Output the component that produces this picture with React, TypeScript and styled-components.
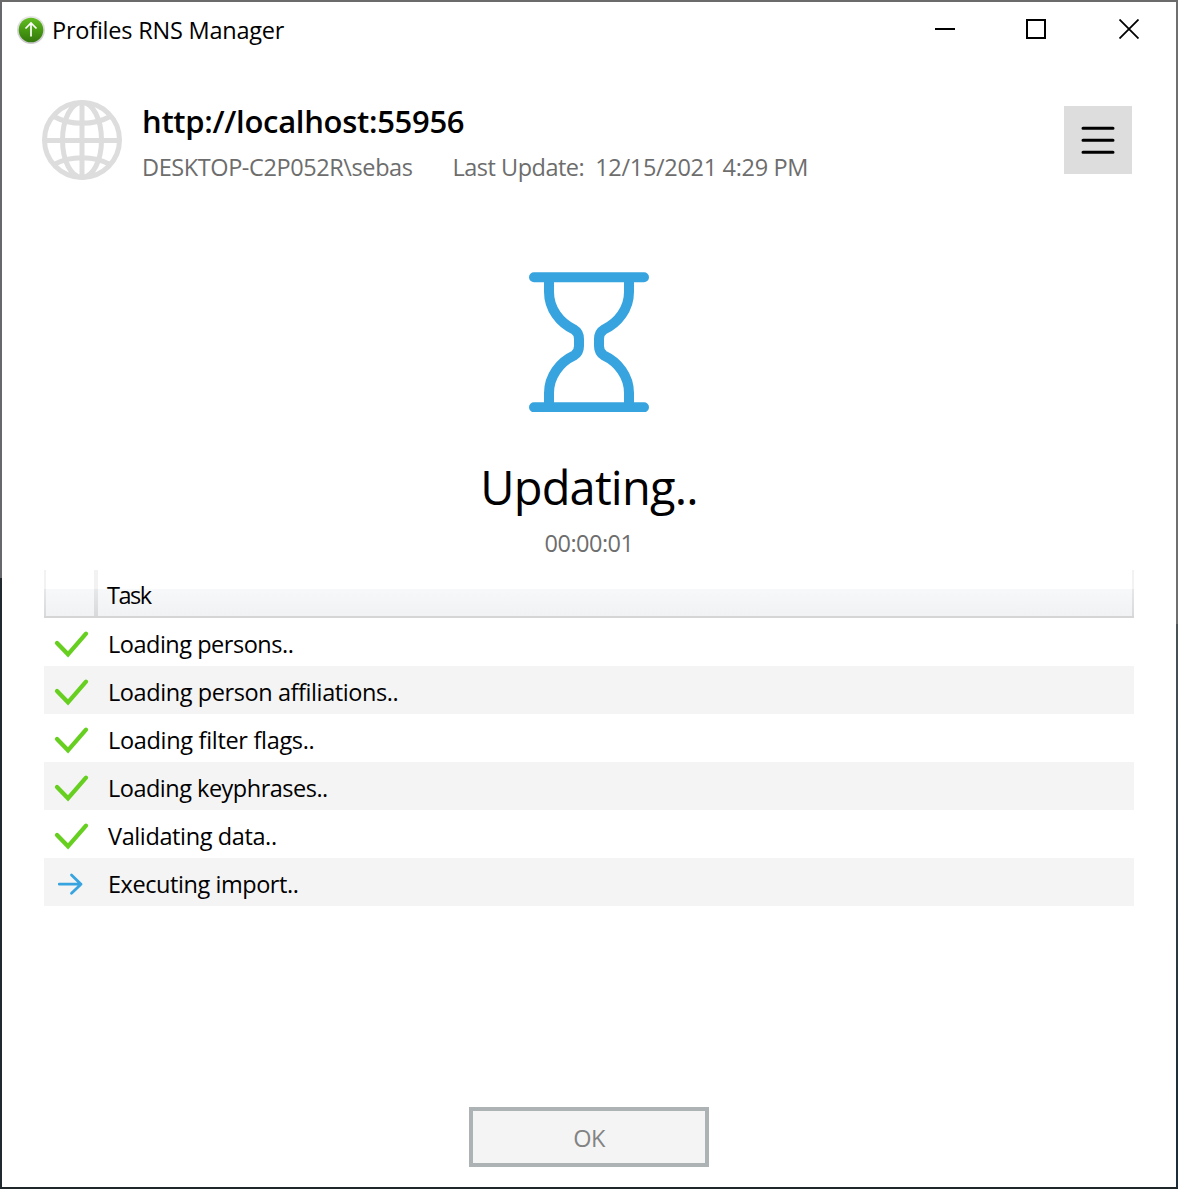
import React from "react";
import styled, { createGlobalStyle } from "styled-components";

const GlobalStyle = createGlobalStyle`
  * { box-sizing: border-box; }
  body { margin: 0; background: #fff; overflow: hidden; }
`;

const WindowFrame = styled.div`
  width: 1178px;
  height: 1189px;
  padding: 2px;
  font-family: "Open Sans", "Noto Sans", sans-serif;
  color: #000;
  background:
    linear-gradient(#6b6b6b, #6b6b6b) top / 100% 2px no-repeat,
    linear-gradient(#20282c, #20262a) bottom / 100% 2px no-repeat,
    linear-gradient(#66686b 0 578px, #22292e 578px) left / 2px 100% no-repeat,
    linear-gradient(#6f6f6e 0 624px, #4a5258 624px, #1c2c38 1100px) right / 2px 100% no-repeat;
`;

const Surface = styled.div`
  height: 100%;
  display: flex;
  flex-direction: column;
  background: #fff;
`;

const Text = styled.span<{ $size?: number; $weight?: number; $track?: number; $color?: string; $line?: number }>`
  display: block;
  white-space: pre;
  font-size: ${(p) => p.$size ?? 23.5}px;
  font-weight: ${(p) => p.$weight ?? 400};
  letter-spacing: ${(p) => p.$track ?? -0.5}px;
  line-height: ${(p) => p.$line ?? 32}px;
  color: ${(p) => p.$color ?? "#000"};
`;

const TitleBar = styled.header`
  display: flex;
  align-items: center;
  height: 56px;
  padding: 0 1px 0 14px;
`;

const TitleText = styled(Text)`
  flex: 1;
  padding: 0 0 0 6px;
`;

const CaptionButton = styled.button<{ $nudge?: number }>`
  width: 92px;
  height: 56px;
  padding: 0 ${(p) => p.$nudge ?? 0}px 2px 0;
  border: 0;
  background: none;
  display: flex;
  align-items: center;
  justify-content: center;
`;

const SiteHeader = styled.section`
  display: flex;
  align-items: flex-start;
  height: 122px;
  padding: 42px 44px 0 40px;
`;

const SiteInfo = styled.div`
  flex: 1;
  padding-left: 20px;
`;

const SiteMeta = styled.div`
  display: flex;
  margin-top: 9px;
`;

const MetaItem = styled(Text)<{ $gap?: number }>`
  margin-left: ${(p) => p.$gap ?? 0}px;
`;

const MenuButton = styled.button`
  width: 68px;
  height: 68px;
  margin-top: 6px;
  padding: 0;
  border: 0;
  background: #ddd;
  display: flex;
  align-items: center;
  justify-content: center;
`;

const Status = styled.section`
  display: flex;
  flex-direction: column;
  align-items: center;
  height: 390px;
  padding-top: 92px;
`;

const StatusTitle = styled(Text)`
  margin-top: 41px;
`;

const Elapsed = styled(Text)`
  margin-top: 6px;
`;

const TaskTable = styled.div`
  width: 1090px;
  margin-left: 42px;
  flex: 1;
`;

const HeadRow = styled.div`
  display: grid;
  grid-template-columns: 54px 1fr;
  height: 48px;
  border-bottom: 2px solid #d5d5d5;
  background: linear-gradient(#fff 0 19px, #f7f8f9 19px, #f1f2f4 46px);
`;

const edge = "linear-gradient(#f2f2f2 0 19px, #e6e7e8 19px, #d9dadb 46px)";

const IconHead = styled.div`
  background: ${edge} left / 2px 100% no-repeat, ${edge} right / 4px 100% no-repeat;
`;

const TaskHead = styled.div`
  padding: 9px 0 0 9px;
  background: ${edge} right / 2px 100% no-repeat;
`;

const TaskRow = styled.div`
  display: grid;
  grid-template-columns: 54px 1fr;
  align-items: center;
  height: 48px;
  background: #fff;
  &:nth-child(odd) { background: #f4f4f4; }
`;

const TaskName = styled(Text)`
  padding: 4px 0 0 10px;
`;

const Footer = styled.footer`
  display: flex;
  justify-content: center;
  height: 80px;
`;

const OkButton = styled.button`
  width: 240px;
  height: 60px;
  padding: 1px 0 0;
  border: 4px solid #adb2b5;
  background: #f4f4f4;
  font-family: inherit;
  display: flex;
  align-items: center;
  justify-content: center;
`;

const Svg = styled.svg`
  display: block;
  flex: none;
`;

const AppIcon = () => (
  <Svg width="30" height="30" viewBox="0 0 30 30" fill="none">
    <defs>
      <linearGradient id="badge" x1="0" y1="0" x2="0" y2="1">
        <stop offset="0" stopColor="#63bd22" />
        <stop offset="0.5" stopColor="#479a12" />
        <stop offset="1" stopColor="#33780c" />
      </linearGradient>
      <linearGradient id="rim" x1="0" y1="0" x2="0" y2="1">
        <stop offset="0" stopColor="#e9e9e9" />
        <stop offset="1" stopColor="#c9c6cc" />
      </linearGradient>
    </defs>
    <circle cx="15" cy="15" r="14" fill="url(#rim)" />
    <circle cx="15" cy="15" r="12.3" fill="url(#badge)" />
    <path d="M15 21.5V8M9.5 13.5L15 8l5.500 5.500" stroke="#fff" strokeWidth="1.700" />
  </Svg>
);

const GlobeIcon = () => (
  <Svg width="80" height="80" viewBox="0 0 80 80" fill="none" stroke="#ddd" strokeWidth="5">
    <circle cx="40" cy="40" r="37.5" />
    <ellipse cx="40" cy="40" rx="19.5" ry="37.5" />
    <path d="M40 2v76M2 40.500h76M12 16.500Q24 23.300 40 23.300T68 16.500M12 64.500Q24 57.700 40 57.700T68 64.500" />
  </Svg>
);

const HourglassIcon = () => (
  <Svg width="120" height="140" viewBox="0 0 120 140" fill="none" stroke="#37a4e0" strokeWidth="10">
    <path strokeLinecap="round" d="M5 5.300H115M5 135.300H115" />
    <path d="M20 5V20C20 37 31 51 45 57.500Q50 60.500 50 67V74Q50 80.500 45 83.500C31 90 20 104 20 121V135" />
    <path d="M100 5V20C100 37 89 51 75 57.500Q70 60.500 70 67V74Q70 80.500 75 83.500C89 90 100 104 100 121V135" />
  </Svg>
);

const MenuIcon = () => (
  <Svg width="36" height="32" viewBox="0 0 36 32" stroke="#000" strokeWidth="3" strokeLinecap="round">
    <path d="M3 4.200h30M3 16.200h30M3 28.200h30" />
  </Svg>
);

const CheckIcon = () => (
  <Svg width="54" height="48" viewBox="0 0 54 48" fill="none" stroke="#66cf20" strokeWidth="4.300" strokeLinecap="round">
    <path d="M13 25L24 36.300L42 15.700" />
  </Svg>
);

const ArrowIcon = () => (
  <Svg width="54" height="48" viewBox="0 0 54 48" fill="none" stroke="#37a4e0" strokeWidth="2.800" strokeLinecap="round" strokeLinejoin="round">
    <path d="M15.300 26.200H37M27.500 17L37 26.200L27.500 35.300" />
  </Svg>
);

const tasks = [
  { name: "Loading persons..", done: true, track: -0.48 },
  { name: "Loading person affiliations..", done: true, track: -0.41 },
  { name: "Loading filter flags..", done: true, track: -0.31 },
  { name: "Loading keyphrases..", done: true, track: -0.5 },
  { name: "Validating data..", done: true, track: -0.38 },
  { name: "Executing import..", done: false, track: -0.44 },
];

export default function App() {
  return (
    <>
      <GlobalStyle />
      <WindowFrame>
        <Surface>
          <TitleBar>
            <AppIcon />
            <TitleText $track={-0.22}>Profiles RNS Manager</TitleText>
            <CaptionButton aria-label="Minimize">
              <Svg width="20" height="20" stroke="#000" strokeWidth="2"><path d="M0 10H20" /></Svg>
            </CaptionButton>
            <CaptionButton aria-label="Maximize" $nudge={2}>
              <Svg width="20" height="20" fill="none" stroke="#000" strokeWidth="2"><path d="M1 1H19V19H1Z" /></Svg>
            </CaptionButton>
            <CaptionButton aria-label="Close">
              <Svg width="20" height="20" stroke="#000" strokeWidth="1.800"><path d="M.5 .5L19.500 19.500M19.500 .5L.5 19.500" /></Svg>
            </CaptionButton>
          </TitleBar>
          <SiteHeader>
            <GlobeIcon />
            <SiteInfo>
              <Text $size={31} $weight={600} $track={-0.3} $line={42}>http://localhost:55956</Text>
              <SiteMeta>
                <MetaItem $color="#6d6d6d" $track={-0.41}>DESKTOP-C2P052R\sebas</MetaItem>
                <MetaItem $color="#6d6d6d" $gap={40}>Last Update:</MetaItem>
                <MetaItem $color="#6d6d6d" $gap={11} $track={-0.32}>12/15/2021 4:29 PM</MetaItem>
              </SiteMeta>
            </SiteInfo>
            <MenuButton aria-label="Menu"><MenuIcon /></MenuButton>
          </SiteHeader>
          <Status>
            <HourglassIcon />
            <StatusTitle $size={47} $track={-0.8} $line={68}>Updating..</StatusTitle>
            <Elapsed $color="#6d6d6d">00:00:01</Elapsed>
          </Status>
          <TaskTable>
            <HeadRow>
              <IconHead />
              <TaskHead><Text $track={-1.5}>Task</Text></TaskHead>
            </HeadRow>
            {tasks.map((task) => (
              <TaskRow key={task.name}>
                {task.done ? <CheckIcon /> : <ArrowIcon />}
                <TaskName $track={task.track}>{task.name}</TaskName>
              </TaskRow>
            ))}
          </TaskTable>
          <Footer>
            <OkButton disabled><Text $color="#838383">OK</Text></OkButton>
          </Footer>
        </Surface>
      </WindowFrame>
    </>
  );
}
